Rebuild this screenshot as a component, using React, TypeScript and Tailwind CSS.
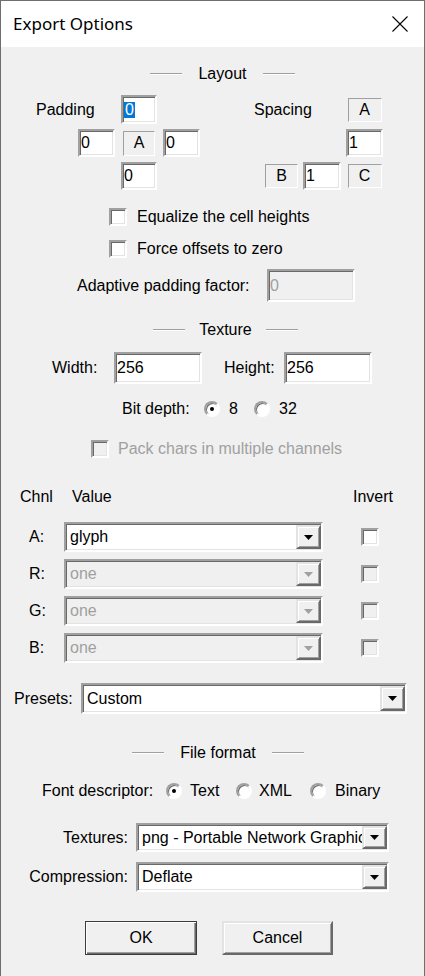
import React from 'react'

const sunken =
  'border-2 border-t-[#a0a0a0] border-l-[#a0a0a0] border-b-white border-r-white shadow-[inset_1px_1px_0_#696969,inset_-1px_-1px_0_#e3e3e3]'
const raised =
  'border-2 border-t-[#e3e3e3] border-l-[#e3e3e3] border-b-[#696969] border-r-[#696969] shadow-[inset_1px_1px_0_#ffffff,inset_-1px_-1px_0_#a0a0a0]'
const etched = 'border border-t-[#a0a0a0] border-l-[#a0a0a0] border-b-white border-r-white'

type Kids = { className?: string; children?: React.ReactNode; disabled?: boolean }

const Field = ({ className = '', disabled = false, children }: Kids) => (
  <div
    className={`${sunken} ${disabled ? 'bg-[#f0f0f0] text-[#a0a0a0]' : 'bg-white'} flex items-center pl-[1px] leading-none ${className}`}
  >
    {children}
  </div>
)

const Tag = ({ className = '', children }: Kids) => (
  <div className={`${etched} flex items-center justify-center leading-none ${className}`}>{children}</div>
)

const Check = ({ disabled = false }: { disabled?: boolean }) => (
  <div className={`${sunken} w-[18px] h-[18px] shrink-0 ${disabled ? 'bg-[#f0f0f0]' : 'bg-white'}`} />
)

const Radio = ({ on = false }: { on?: boolean }) => (
  <div className="relative w-[16px] h-[16px] shrink-0 rounded-full border-2 border-t-[#a0a0a0] border-l-[#a0a0a0] border-b-white border-r-white bg-white shadow-[inset_1px_1px_0_#696969]">
    {on && <div className="absolute left-[4px] top-[4px] w-[4px] h-[4px] rounded-full bg-black" />}
  </div>
)

const Combo = ({ value, disabled = false, className = '' }: { value: string; disabled?: boolean; className?: string }) => (
  <div
    className={`${sunken} ${disabled ? 'bg-[#f0f0f0] text-[#a0a0a0]' : 'bg-white'} flex items-stretch ${className}`}
  >
    <div className="flex-1 min-w-0 overflow-hidden whitespace-nowrap flex items-center pl-[4px]">{value}</div>
    <div className={`${raised} w-[25px] shrink-0 my-[1px] flex items-center justify-center bg-[#f0f0f0]`}>
      <svg width="9" height="5" viewBox="0 0 9 5">
        <path d="M0 0h9L4.5 5z" fill={disabled ? '#a0a0a0' : '#000'} />
      </svg>
    </div>
  </div>
)

const Rule = () => <div className="w-[32px] h-[2px] border-t border-t-[#a0a0a0] border-b border-b-white" />

const Heading = ({ label, className, mid }: { label: string; className: string; mid: string }) => (
  <div className={`flex items-center h-[18px] ${className}`}>
    <Rule />
    <div className={`text-center ${mid}`}>{label}</div>
    <Rule />
  </div>
)

const channels = [
  { ch: 'A:', value: 'glyph', disabled: false },
  { ch: 'R:', value: 'one', disabled: true },
  { ch: 'G:', value: 'one', disabled: true },
  { ch: 'B:', value: 'one', disabled: true },
]

export default function App() {
  return (
    <div className="w-[425px] h-[976px] flex flex-col border border-b-0 border-[#6e6e6e] bg-[#f0f0f0] font-['Liberation_Sans',Arial,sans-serif] text-[16px] leading-[18px] text-black overflow-hidden">
      {/* title bar */}
      <div className="h-[46px] shrink-0 bg-white flex items-center pl-[12px] pr-[16px]">
        <span className="flex-1 font-['Noto_Sans',sans-serif] text-[17px]">Export Options</span>
        <svg width="16" height="16" viewBox="0 0 16 16">
          <path d="M0.5 0.5L15.5 15.5M15.5 0.5L0.5 15.5" stroke="#000" strokeWidth="1.1" />
        </svg>
      </div>

      <Heading label="Layout" className="mt-[18px] pl-[149px]" mid="w-[81px]" />

      {/* padding / spacing */}
      <div className="mt-[12px] flex pl-[35px] gap-[54px]">
        <div className="grid grid-cols-[36px_37px_36px_37px] grid-rows-[29px_28px_28px] gap-x-[6px] gap-y-[5px]">
          <div className="col-start-1 col-span-2 row-start-1 self-center">Padding</div>
          <Field className="col-start-3 row-start-1">
            <span className="bg-[#0078d7] text-white px-[1px]">0</span>
          </Field>
          <Field className="col-start-2 row-start-2">0</Field>
          <Tag className="col-start-3 row-start-2 justify-self-center self-center w-[32px] h-[25px]">A</Tag>
          <Field className="col-start-4 row-start-2">0</Field>
          <Field className="col-start-3 row-start-3">0</Field>
        </div>
        <div className="grid grid-cols-[44px_38px_37px] grid-rows-[29px_28px_28px] gap-x-[5px] gap-y-[5px]">
          <div className="col-start-1 col-span-2 row-start-1 self-center">Spacing</div>
          <Tag className="col-start-3 row-start-1 justify-self-center self-center w-[34px] h-[24px]">A</Tag>
          <Field className="col-start-3 row-start-2">1</Field>
          <Tag className="col-start-1 row-start-3 justify-self-end self-center w-[33px] h-[24px]">B</Tag>
          <Field className="col-start-2 row-start-3">1</Field>
          <Tag className="col-start-3 row-start-3 justify-self-center self-center w-[34px] h-[24px]">C</Tag>
        </div>
      </div>

      <div className="mt-[18px] flex items-center h-[18px] pl-[108px] gap-[10px]">
        <Check />
        <span>Equalize the cell heights</span>
      </div>
      <div className="mt-[14px] flex items-center h-[18px] pl-[108px] gap-[10px]">
        <Check />
        <span>Force offsets to zero</span>
      </div>
      <div className="mt-[11px] flex items-center pl-[76px]">
        <span className="w-[190px]">Adaptive padding factor:</span>
        <Field disabled className="w-[88px] h-[33px]">0</Field>
      </div>

      <Heading label="Texture" className="mt-[19px] pl-[152px]" mid="w-[81px]" />

      <div className="mt-[13px] flex items-center pl-[51px]">
        <span className="w-[62px]">Width:</span>
        <Field className="w-[88px] h-[32px]">256</Field>
        <span className="ml-[22px] w-[60px]">Height:</span>
        <Field className="w-[88px] h-[32px]">256</Field>
      </div>

      <div className="mt-[16px] flex items-center h-[18px] pl-[121px]">
        <span className="w-[82px]">Bit depth:</span>
        <Radio on />
        <span className="ml-[9px] w-[25px]">8</span>
        <Radio />
        <span className="ml-[9px]">32</span>
      </div>

      <div className="mt-[22px] flex items-center h-[18px] pl-[90px] gap-[9px] text-[#a0a0a0]">
        <Check disabled />
        <span>Pack chars in multiple channels</span>
      </div>

      <div className="mt-[30px] flex items-center h-[18px] pl-[19px]">
        <span className="w-[52px]">Chnl</span>
        <span className="w-[281px]">Value</span>
        <span>Invert</span>
      </div>

      <div className="mt-[16px] flex flex-col gap-[7px]">
        {channels.map((c) => (
          <div key={c.ch} className="flex items-center pl-[28px]">
            <span className="w-[35px]">{c.ch}</span>
            <Combo value={c.value} disabled={c.disabled} className="w-[259px] h-[30px]" />
            <div className="ml-[38px]">
              <Check disabled={c.disabled} />
            </div>
          </div>
        ))}
      </div>

      <div className="mt-[20px] flex items-center pl-[13px]">
        <span className="w-[67px]">Presets:</span>
        <Combo value="Custom" className="w-[326px] h-[31px]" />
      </div>

      <Heading label="File format" className="mt-[30px] pl-[131px]" mid="w-[108px]" />

      <div className="mt-[20px] flex items-center h-[18px] pl-[41px]">
        <span className="w-[124px]">Font descriptor:</span>
        <Radio on />
        <span className="ml-[8px] w-[46px]">Text</span>
        <Radio />
        <span className="ml-[7px] w-[51px]">XML</span>
        <Radio />
        <span className="ml-[9px]">Binary</span>
      </div>

      <div className="mt-[23px] flex items-center">
        <span className="w-[127px] text-right">Textures:</span>
        <Combo value="png - Portable Network Graphics" className="ml-[8px] w-[253px] h-[29px]" />
      </div>
      <div className="mt-[10px] flex items-center">
        <span className="w-[127px] text-right">Compression:</span>
        <Combo value="Deflate" className="ml-[8px] w-[253px] h-[30px]" />
      </div>

      <div className="mt-[29px] flex pl-[84px] gap-[25px]">
        <button className="w-[112px] h-[34px] bg-[#f0f0f0] border border-[#3c3c3c] shadow-[inset_1px_1px_0_#ffffff,inset_-1px_-1px_0_#696969,inset_-2px_-2px_0_#a0a0a0]">
          OK
        </button>
        <button className={`${raised} w-[111px] h-[34px] bg-[#f0f0f0]`}>Cancel</button>
      </div>
    </div>
  )
}
